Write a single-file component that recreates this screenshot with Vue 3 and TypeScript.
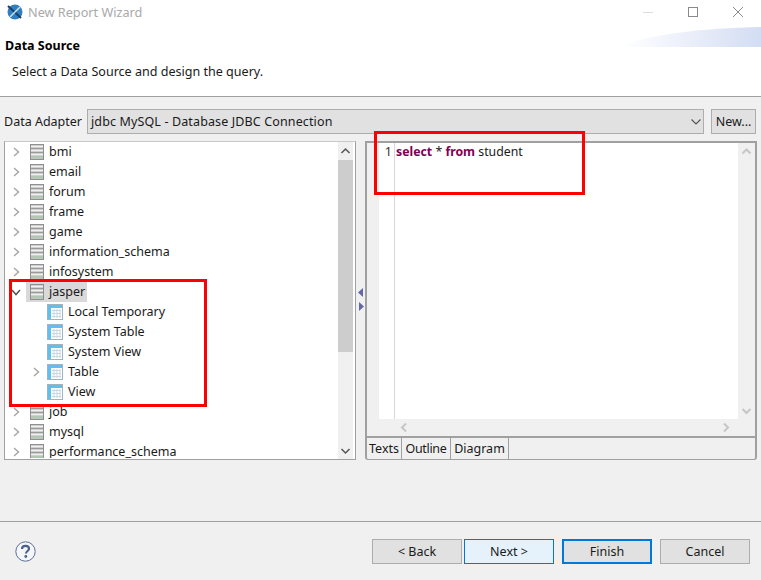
<script setup lang="ts">
interface Node { name: string; child?: boolean; arrow?: 'right' | 'down' | 'none'; selected?: boolean }
const nodes: Node[] = [
  { name: 'bmi' }, { name: 'email' }, { name: 'forum' }, { name: 'frame' }, { name: 'game' },
  { name: 'information_schema' }, { name: 'infosystem' },
  { name: 'jasper', arrow: 'down', selected: true },
  { name: 'Local Temporary', child: true, arrow: 'none' },
  { name: 'System Table', child: true, arrow: 'none' },
  { name: 'System View', child: true, arrow: 'none' },
  { name: 'Table', child: true },
  { name: 'View', child: true, arrow: 'none' },
  { name: 'job' }, { name: 'mysql' }, { name: 'performance_schema' },
]
</script>

<template>
  <div class="win">
    <header class="head">
      <div class="titlebar">
        <svg class="logo" width="16" height="16" viewBox="0 0 16 16">
          <circle cx="8" cy="8" r="7.5" fill="#2f7fc4" />
          <path d="M1 2 L14 14" stroke="#1c3f63" stroke-width="2" />
          <path d="M13 3 L3 13" stroke="#cfe3f4" stroke-width="1.5" />
        </svg>
        <span class="title">New Report Wizard</span>
        <div class="winbtns">
          <svg width="12" height="12" viewBox="0 0 12 12"><path d="M1 6.5H11" stroke="#dcdcdc" /></svg>
          <svg width="12" height="12" viewBox="0 0 12 12"><rect x="1.5" y="1.5" width="9" height="9" fill="none" stroke="#8a8a8a" /></svg>
          <svg width="12" height="12" viewBox="0 0 12 12"><path d="M1 1L11 11M11 1L1 11" stroke="#8a8a8a" /></svg>
        </div>
      </div>
      <h1 class="h">Data Source</h1>
      <p class="sub">Select a Data Source and design the query.</p>
      <svg class="swoosh" width="139" height="20" viewBox="0 0 139 20">
        <defs><linearGradient id="sw" x1="0" x2="1" y1="0" y2="0"><stop offset="0" stop-color="#ffffff" /><stop offset="1" stop-color="#d3ddf3" /></linearGradient></defs>
        <path d="M0 20C20 8 80 1 139 0V20Z" fill="url(#sw)" />
      </svg>
    </header>

    <main class="body">
      <div class="adapter">
        <label class="alabel">Data Adapter</label>
        <div class="select">
          <span class="seltext">jdbc MySQL - Database JDBC Connection</span>
          <svg width="12" height="8" viewBox="0 0 12 8"><path d="M1.5 1.5L6 6L10.5 1.5" fill="none" stroke="#555" stroke-width="1.2" /></svg>
        </div>
        <button class="btn newbtn">New...</button>
      </div>

      <div class="panes">
        <section class="tree">
          <ul class="rows">
            <li v-for="n in nodes" :key="n.name" class="row" :class="{ child: n.child }">
              <span class="arrow">
                <svg v-if="n.arrow !== 'none'" width="10" height="10" viewBox="0 0 10 10">
                  <path v-if="n.arrow === 'down'" d="M1 3L5 7.5L9 3" fill="none" stroke="#555" stroke-width="1.5" />
                  <path v-else d="M3 1L7.5 5L3 9" fill="none" stroke="#a8a8a8" stroke-width="1.5" />
                </svg>
              </span>
              <span class="item" :class="{ sel: n.selected }">
                <svg v-if="n.child" class="ico" width="16" height="16" viewBox="0 0 16 16">
                  <rect x="0.5" y="0.5" width="15" height="15" fill="#fff" stroke="#9cb4c4" />
                  <rect x="1" y="1" width="14" height="3" fill="#5cc0f0" />
                  <rect x="1" y="1" width="3" height="14" fill="#5cc0f0" />
                  <path d="M5 6.5H14M5 9.5H14M5 12.5H14M7 5V14M10 5V14M13 5V14" stroke="#c6d8e2" />
                </svg>
                <svg v-else class="ico" width="16" height="16" viewBox="0 0 16 16">
                  <rect x="1.5" y="0.5" width="13" height="15" fill="#c4c4c4" stroke="#8f8f8f" />
                  <path d="M2 2.5H14M2 6.5H14M2 10.5H14" stroke="#f0f0f0" stroke-width="1.5" />
                  <path d="M2 4.5H14M2 8.5H14" stroke="#9a9a9a" />
                  <path d="M2 13H14" stroke="#aac8aa" stroke-width="1.5" />
                </svg>
                <span class="label">{{ n.name }}</span>
              </span>
            </li>
          </ul>
          <div class="vbar">
            <svg class="sbarrow" width="15" height="17" viewBox="1 0 15 17"><path d="M4.5 11L8.5 7L12.5 11" fill="none" stroke="#555" stroke-width="1.5" /></svg>
            <div class="track"><div class="thumb"></div></div>
            <svg class="sbarrow" width="15" height="17" viewBox="1 0 15 17"><path d="M4.5 7L8.5 11L12.5 7" fill="none" stroke="#555" stroke-width="1.5" /></svg>
          </div>
        </section>

        <div class="sash">
          <svg width="6" height="10" viewBox="0 0 6 10"><path d="M5 0V9L0 4.5Z" fill="#6468a8" /></svg>
          <svg width="6" height="10" viewBox="0 0 6 10"><path d="M1 0V9L6 4.5Z" fill="#6468a8" /></svg>
        </div>

        <section class="editor">
          <div class="edmain">
            <div class="edcol">
              <div class="ruler"></div>
              <div class="lineno"><span>1</span></div>
              <div class="code"><b>select</b> * <b>from</b> <i>student</i></div>
              <div class="vbar2">
                <svg width="17" height="17" viewBox="0 0 17 17"><path d="M4.5 10.5L8.5 6.5L12.5 10.5" fill="none" stroke="#c6c6c6" stroke-width="2" /></svg>
                <svg width="17" height="17" viewBox="0 0 17 17"><path d="M4.5 7L8.5 11L12.5 7" fill="none" stroke="#c6c6c6" stroke-width="2" /></svg>
              </div>
            </div>
            <div class="hbar">
              <svg width="17" height="17" viewBox="0 0 17 17"><path d="M10 4.5L6 8.5L10 12.5" fill="none" stroke="#c6c6c6" stroke-width="2" /></svg>
              <svg width="17" height="17" viewBox="0 0 17 17"><path d="M7 4.5L11 8.5L7 12.5" fill="none" stroke="#c6c6c6" stroke-width="2" /></svg>
            </div>
          </div>
          <nav class="tabs">
            <span class="tab t1">Texts</span>
            <span class="tab t2">Outline</span>
            <span class="tab t3">Diagram</span>
          </nav>
        </section>
      </div>
    </main>

    <footer class="foot">
      <svg class="help" width="21" height="21" viewBox="0 0 21 21">
        <circle cx="10.5" cy="10.5" r="9.7" fill="#f4f6f9" stroke="#5a7095" />
        <path d="M7 8C7 5.8 8.6 4.8 10.5 4.8C12.5 4.8 14 5.9 14 7.7C14 10 11 10 11 12.5" fill="none" stroke="#4a6189" stroke-width="2.2" />
        <circle cx="10.8" cy="15.5" r="1.4" fill="#4a6189" />
      </svg>
      <div class="actions">
        <button class="btn act back">&lt; Back</button>
        <button class="btn act next">Next &gt;</button>
        <button class="btn act finish">Finish</button>
        <button class="btn act">Cancel</button>
      </div>
    </footer>

    <div class="mark m1"></div>
    <div class="mark m2"></div>
  </div>
</template>

<style>
html, body { margin: 0; background: #f0f0f0; }
</style>

<style scoped>
.win {
  position: relative;
  width: 761px;
  height: 580px;
  overflow: hidden;
  background: #f0f0f0;
  font-family: "Noto Sans", "Open Sans", sans-serif;
  font-size: 12.5px;
  color: #1a1a1a;
  display: flex;
  flex-direction: column;
}
.head {
  position: relative;
  height: 96px;
  background: #fff;
  border-bottom: 1px solid #a0a0a0;
  flex: none;
}
.titlebar {
  height: 24px;
  display: flex;
  align-items: center;
  padding-left: 7px;
}
.logo { flex: none; }
.title { margin-left: 5px; color: #a9a9a9; font-size: 12.7px; }
.winbtns {
  margin-left: auto;
  width: 102px;
  margin-right: 17px;
  display: flex;
  justify-content: space-between;
  align-items: center;
}
.h { margin: 13px 0 0 5px; font-size: 12.5px; font-weight: 700; color: #000; line-height: 17px; }
.sub { margin: 9px 0 0 12px; font-size: 12.55px; line-height: 17px; }
.swoosh { position: absolute; right: 0; top: 27px; }
.body { flex: none; height: 424px; padding: 12px 4px 0; box-sizing: border-box; }
.adapter { display: flex; align-items: center; height: 25px; }
.alabel { width: 83px; flex: none; white-space: nowrap; }
.select {
  width: 617px;
  height: 25px;
  box-sizing: border-box;
  background: #e1e1e1;
  border: 1px solid #adadad;
  display: flex;
  align-items: center;
  justify-content: space-between;
  padding: 0 1px 0 3px;
  font-size: 12.5px;
}
.seltext { letter-spacing: 0.13px; }
.btn {
  font-family: inherit;
  font-size: 12.5px;
  color: #1a1a1a;
  background: #e1e1e1;
  border: 1px solid #adadad;
  padding: 0;
  box-sizing: border-box;
}
.newbtn { width: 45px; height: 25px; margin-left: 7px; }
.panes { display: flex; margin-top: 7px; height: 319px; }
.tree {
  width: 352px;
  height: 319px;
  box-sizing: border-box;
  background: #fff;
  border: 1px solid #a0a0a0;
  border-top-color: #c8c8c8;
  display: flex;
  overflow: hidden;
  flex: none;
}
.rows { list-style: none; margin: 0; padding: 0; flex: 1; min-width: 0; height: 316px; overflow: hidden; }
.row { height: 20px; display: flex; align-items: center; padding-left: 6px; white-space: nowrap; }
.row.child { padding-left: 26px; }
.arrow { width: 10px; height: 10px; display: block; flex: none; margin-right: 5px; }
.arrow svg { display: block; }
.item { display: flex; align-items: center; height: 20px; padding: 0 2px 0 3px; }
.item.sel { background: #d9d9d9; }
.row.child .item { padding-left: 1px; }
.ico { flex: none; }
.label { margin-left: 4px; line-height: 20px; }
.row.child .label { margin-left: 5px; }
.vbar { width: 15px; flex: none; background: #f0f0f0; display: flex; flex-direction: column; margin-right: 2px; }
.sbarrow { flex: none; display: block; }
.track { flex: 1; }
.thumb { height: 192px; background: #cdcdcd; margin-top: 1px; }
.sash {
  width: 9px;
  height: 319px;
  flex: none;
  display: flex;
  flex-direction: column;
  align-items: center;
  justify-content: center;
  gap: 4px;
  box-sizing: border-box;
  padding-bottom: 1px;
}
.editor {
  width: 392px;
  height: 319px;
  box-sizing: border-box;
  border: 1px solid #a0a0a0;
  border-width: 2px 2px 1px 2px;
  border-radius: 0 0 3px 3px;
  display: flex;
  flex-direction: column;
  flex: none;
  background: #f0f0f0;
}
.edmain { flex: 1; min-height: 0; display: flex; flex-direction: column; border-bottom: 2px solid #a0a0a0; }
.edcol { flex: 1; display: flex; min-height: 0; position: relative; }
.ruler { width: 12px; flex: none; background: #f0f0f0; }
.lineno { width: 15px; flex: none; background: #fff; border-right: 1px solid #d8d8d8; text-align: right; line-height: 18px; }
.lineno span { padding-right: 2px; color: #333; }
.code { flex: 1; background: #fff; padding: 0 0 0 1px; line-height: 18px; white-space: pre; font-size: 12.3px; }
.code b { color: #7f0055; font-weight: 700; }
.code i { font-style: normal; }
.vbar2 { width: 17px; flex: none; display: flex; flex-direction: column; justify-content: space-between; }
.vbar2 svg { display: block; }
.hbar { height: 17px; flex: none; display: flex; justify-content: space-between; padding: 0 21px 0 29px; }
.hbar svg { display: block; }
.tabs { height: 21px; display: flex; flex: none; font-size: 12.5px; }
.tab { display: flex; align-items: center; justify-content: center; box-sizing: border-box; border-right: 1px solid #a0a0a0; }
.t1 { width: 35px; }
.t2 { width: 49px; letter-spacing: -0.3px; }
.t3 { width: 58px; }
.foot {
  flex: 1;
  border-top: 1px solid #a0a0a0;
  display: flex;
  justify-content: space-between;
  padding: 17px 11px 0 15px;
  box-sizing: border-box;
  align-items: flex-start;
}
.help { margin-top: 2px; }
.actions { display: flex; }
.act { width: 90px; height: 25px; margin-left: 8px; }
.act.back { margin-left: 0; }
.act.next { margin-left: 2px; background: #e5f1fb; border-color: #0078d7; }
.finish { border: 2px solid #0078d7; }
.mark { position: absolute; border: 3px solid #f00; box-sizing: border-box; pointer-events: none; }
.m1 { left: 374px; top: 131px; width: 211px; height: 64px; }
.m2 { left: 9px; top: 279px; width: 198px; height: 128px; }
</style>
